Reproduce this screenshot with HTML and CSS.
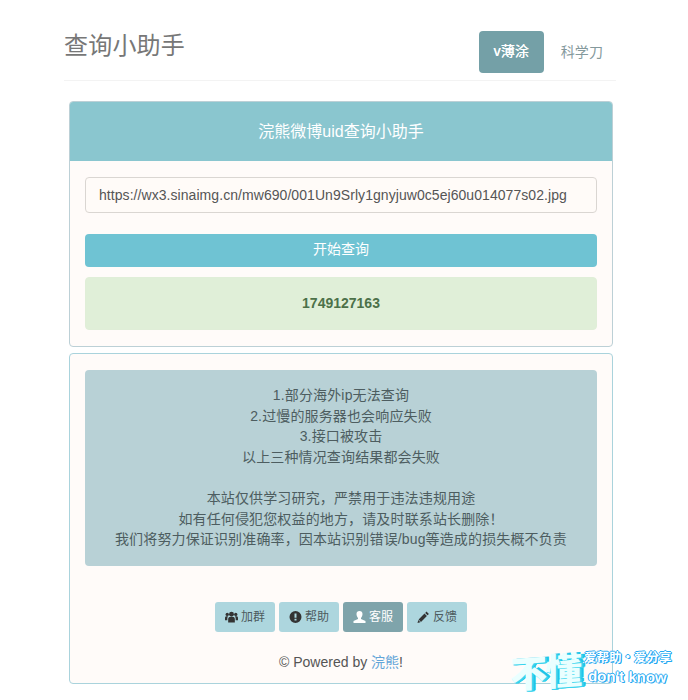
FILE: index.html
```html
<!DOCTYPE html>
<html lang="zh-CN">
<head>
<meta charset="utf-8">
<title>查询小助手</title>
<link rel="stylesheet" href="styles.css">
</head>
<body>
<div class="page">
  <header class="top">
    <h3 class="brand">查询小助手</h3>
    <nav class="tabs">
      <a class="tab active">v薄涂</a>
      <a class="tab">科学刀</a>
    </nav>
  </header>
  <main class="content">
    <section class="panel">
      <div class="panel-head">浣熊微博uid查询小助手</div>
      <div class="panel-body">
        <div class="field">https://wx3.sinaimg.cn/mw690/001Un9Srly1gnyjuw0c5ej60u014077s02.jpg</div>
        <button class="go">开始查询</button>
        <div class="result">1749127163</div>
      </div>
    </section>
    <section class="panel second">
      <div class="panel-body">
        <div class="notice">
          1.部分海外ip无法查询<br>
          2.过慢的服务器也会响应失败<br>
          3.接口被攻击<br>
          以上三种情况查询结果都会失败<br>
          <br>
          本站仅供学习研究，严禁用于违法违规用途<br>
          如有任何侵犯您权益的地方，请及时联系站长删除！<br>
          我们将努力保证识别准确率，因本站识别错误/bug等造成的损失概不负责
        </div>
        <div class="actions">
          <a class="chip">
            <svg class="ico" viewBox="0 0 14 12"><circle cx="7" cy="3" r="2.6"/><circle cx="2.4" cy="3.2" r="1.8"/><circle cx="11.6" cy="3.2" r="1.8"/><path d="M3.4 12V8.2C3.4 6.7 4.4 6 5.4 6h3.2c1 0 2 .7 2 2.2V12z"/><path d="M0 9.5V7c0-1 .7-1.7 1.7-1.7h1.6C2.7 6 2.5 7 2.5 8v1.500zM14 9.500V7c0-1-.7-1.700-1.700-1.700h-1.600c.6.7.8 1.700.8 2.700v1.500z"/></svg>加群</a>
          <a class="chip">
            <svg class="ico" viewBox="0 0 12 12"><path fill-rule="evenodd" d="M6 0a6 6 0 1 1 0 12A6 6 0 0 1 6 0zM5 2.500v4.200h2V2.500zM5 7.700v1.800h2V7.700z"/></svg>帮助</a>
          <a class="chip on">
            <svg class="ico" viewBox="0 0 12 12"><path d="M6 0c1.900 0 3 1.300 3 3.100C9 4.700 8.200 6.300 7.500 6.900v1.200L12 10v2H0v-2l4.500-1.900V6.900C3.800 6.300 3 4.700 3 3.100 3 1.300 4.100 0 6 0z"/></svg>客服</a>
          <a class="chip">
            <svg class="ico" viewBox="0 0 12 12"><path d="M9 .6l2.400 2.400-1.300 1.300-2.400-2.400zM7 2.600L9.400 5l-5.900 5.900-2.400-2.400zM.8 9.100l2.100 2.100L0 12z"/></svg>反馈</a>
        </div>
        <p class="credit">© Powered by <a class="credit-link">浣熊</a>!</p>
      </div>
    </section>
  </main>
</div>
<div class="mark">
  <span class="mark-big">不懂</span>
  <span class="mark-side"><span class="mark-cn">爱帮助·爱分享</span><span class="mark-en">don't know</span></span>
</div>
</body>
</html>
```
FILE: styles.css
```css
* { box-sizing: border-box; }
html, body { margin: 0; height: 700px; overflow: hidden; }
body {
  background: #fff;
  color: #555;
  font-family: "Liberation Sans", "Noto Sans CJK SC", sans-serif;
  font-size: 14px;
  line-height: 20px;
  position: relative;
}
.page { width: 552px; margin-left: 64px; }
.top {
  height: 81px;
  padding-top: 31px;
  border-bottom: 1px solid #f3f3f3;
  display: flex;
  justify-content: space-between;
  align-items: flex-start;
}
.brand {
  margin: 0;
  font-size: 24px;
  line-height: 30px;
  font-weight: 400;
  color: #777;
  letter-spacing: .2px;
}
.tabs { display: flex; gap: 2px; margin-right: -2px; }
.tab {
  padding: 11px 15px;
  height: 42px;
  color: #84999c;
  border-radius: 4px;
  font-size: 14px;
  letter-spacing: .1px;
}
.tab.active { background: #74a0a7; color: #fff; width: 65px; text-align: center; padding: 10px 0; text-shadow: .3px 0 0 #fff; }
.content { padding: 20px 0 0 5px; width: 549px; }
.panel {
  border: 1px solid #bcd0d6;
  border-radius: 4px;
  background: #fffbf9;
  overflow: hidden;
}
.second { margin-top: 6px; border-color: #a9d3dc; height: 331px; }
.panel-head {
  background: #8ac6cf;
  color: #fff;
  font-size: 16px;
  height: 59px;
  line-height: 59px;
  text-align: center;
}
.panel-body { padding: 16px 15px 16px; }
.field {
  height: 36px;
  padding: 7px 13px;
  border: 1px solid #dad6d2;
  border-radius: 4px;
  background: #fffbf8;
  color: #555;
  letter-spacing: .06px;
  white-space: nowrap;
}
.go {
  display: block;
  width: 100%;
  height: 33px;
  margin-top: 21px;
  padding: 0 0 4px;
  border: 0;
  border-radius: 4px;
  background: #6fc3d3;
  color: #fff;
  font: inherit;
  font-size: 14px;
}
.result {
  height: 53px;
  margin-top: 10px;
  border: 1px solid #e0eed8;
  border-radius: 4px;
  background: #e0efd8;
  color: #4c7149;
  font-weight: 700;
  line-height: 51px;
  text-align: center;
}
.notice {
  height: 196px;
  padding: 15px 15px;
  border-radius: 4px;
  background: #b8d1d6;
  color: #4d5d60;
  text-align: center;
  line-height: 20.600px;
  letter-spacing: .14px;
}
.actions {
  display: flex;
  justify-content: center;
  gap: 4px;
  margin-top: 36px;
}
.chip {
  display: flex;
  align-items: center;
  justify-content: center;
  gap: 3px;
  width: 60px;
  height: 30px;
  border-radius: 3px;
  background: #add6de;
  color: #4d5b5e;
  font-size: 12px;
}
.chip.on { background: #7fa4ab; color: #fff; }
.ico { width: 13px; height: 12px; fill: #333; flex: none; }
.chip.on .ico { fill: #fff; }
.credit { margin: 20px 0 0; text-align: center; color: #555; }
.credit-link { color: #63a5d8; }
.mark {
  position: absolute;
  left: 510px;
  top: 651px;
  display: flex;
  align-items: flex-start;
  gap: 4px;
  pointer-events: none;
}
.mark-big {
  font-family: "Noto Sans CJK SC", sans-serif;
  font-weight: 900;
  font-size: 37px;
  line-height: 38px;
  letter-spacing: -2px;
  color: #eaffff;
  text-shadow: 1px 1px 0 #39d5ee, 2px 1px 0 #39d5ee, 3px 1px 0 #1fc4e8, 4px 0 0 #1fc4e8;
  transform: skewY(-4deg);
}
.mark-side { display: flex; flex-direction: column; align-items: center; margin-top: -2px; }
.mark-cn, .mark-en {
  color: #fff;
  font-weight: 700;
  white-space: nowrap;
  text-shadow: 1px 1px 0 #23a8f2, -1px 0 0 #23a8f2, 0 -1px 0 #23a8f2, 1px 0 0 #23a8f2;
}
.mark-cn { font-size: 12.500px; line-height: 16px; font-family: "Noto Sans CJK SC", sans-serif; }
.mark-en { font-size: 15px; line-height: 16px; margin-top: 4px; transform: rotate(1deg); }
```
